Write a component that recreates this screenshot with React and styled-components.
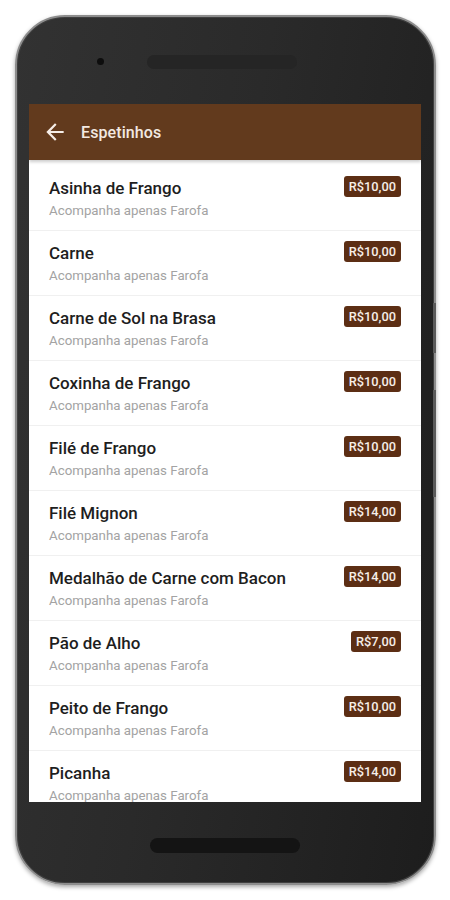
import React from "react";
import styled, { createGlobalStyle } from "styled-components";

const Global = createGlobalStyle`
  html, body { margin: 0; padding: 0; background: #ffffff; }
  body { font-family: Roboto, "Noto Sans", Arial, sans-serif; }
`;

const Page = styled.div`
  width: 450px;
  height: 900px;
  display: flex;
  justify-content: center;
  padding-top: 15px;
  box-sizing: border-box;
`;

const Phone = styled.div`
  position: relative;
  width: 421px;
  height: 870px;
  box-sizing: border-box;
  border: 2px solid #8d8d8d;
  border-radius: 50px;
  background: linear-gradient(100deg, #323232 0%, #2a2a2a 45%, #1d1d1d 100%);
  box-shadow: inset 0 0 0 1px #3f3f3f, 0 2px 4px rgba(0, 0, 0, 0.35);
  display: flex;
  flex-direction: column;
  align-items: center;
`;

const SideButton = styled.div`
  position: absolute;
  right: -2px;
  top: ${(p) => p.$top}px;
  width: 3px;
  height: ${(p) => p.$h}px;
  background: #5a5a5a;
`;

const TopBezel = styled.div`
  height: 87px;
  width: 100%;
  display: flex;
  align-items: flex-start;
  padding-top: 38px;
  padding-left: 80px;
  box-sizing: border-box;
  gap: 43px;
`;

const Camera = styled.div`
  width: 7px;
  height: 7px;
  border-radius: 50%;
  background: #0d0d0d;
  margin-top: 3px;
`;

const Speaker = styled.div`
  width: 150px;
  height: 14px;
  border-radius: 7px;
  background: #252525;
`;

const Screen = styled.div`
  width: 392px;
  height: 698px;
  background: #ffffff;
  overflow: hidden;
  display: flex;
  flex-direction: column;
`;

const AppBar = styled.div`
  height: 56px;
  flex: none;
  background: #623a1d;
  display: flex;
  align-items: center;
  padding-left: 13px;
  gap: 13px;
  box-shadow: 0 2px 3px rgba(0, 0, 0, 0.2);
  position: relative;
  z-index: 1;
`;

const BarTitle = styled.div`
  color: #f3e9e1;
  font-size: 16px;
  font-weight: 500;
  letter-spacing: 0.1px;
`;

const List = styled.div`
  padding-top: 6px;
  display: flex;
  flex-direction: column;
`;

const Row = styled.div`
  height: 65px;
  flex: none;
  box-sizing: border-box;
  padding: 10px 20px 0 20px;
  display: flex;
  justify-content: space-between;
  align-items: flex-start;
  border-bottom: 1px solid #f0f0f0;
`;

const Texts = styled.div`
  display: flex;
  flex-direction: column;
`;

const Title = styled.div`
  margin-top: 1px;
  font-size: 17px;
  line-height: 22px;
  font-weight: 500;
  color: #1e1e1e;
`;

const Sub = styled.div`
  margin-top: 4px;
  font-size: 13.3px;
  line-height: 16px;
  color: #a3a3a3;
`;

const Price = styled.div`
  background: #5c2e14;
  color: #f7efe9;
  font-size: 12.8px;
  font-weight: 500;
  line-height: 21px;
  padding: 0 5px;
  border-radius: 3px;
`;

const BottomBezel = styled.div`
  flex: 1;
  width: 100%;
  display: flex;
  justify-content: center;
  padding-top: 36px;
  box-sizing: border-box;
`;

const HomePill = styled.div`
  width: 150px;
  height: 15px;
  border-radius: 8px;
  background: #141414;
`;

const items = [
  ["Asinha de Frango", "R$10,00"],
  ["Carne", "R$10,00"],
  ["Carne de Sol na Brasa", "R$10,00"],
  ["Coxinha de Frango", "R$10,00"],
  ["Filé de Frango", "R$10,00"],
  ["Filé Mignon", "R$14,00"],
  ["Medalhão de Carne com Bacon", "R$14,00"],
  ["Pão de Alho", "R$7,00"],
  ["Peito de Frango", "R$10,00"],
  ["Picanha", "R$14,00"],
];

const BackArrow = () => (
  <svg width="26" height="26" viewBox="0 0 24 24" fill="#f6eee8">
    <path d="M20 11H7.83l5.59-5.59L12 4l-8 8 8 8 1.41-1.41L7.83 13H20v-2z" />
  </svg>
);

export default function App() {
  return (
    <>
      <Global />
      <Page>
        <Phone>
          <SideButton $top={286} $h={50} />
          <SideButton $top={373} $h={107} />
          <TopBezel>
            <Camera />
            <Speaker />
          </TopBezel>
          <Screen>
            <AppBar>
              <BackArrow />
              <BarTitle>Espetinhos</BarTitle>
            </AppBar>
            <List>
              {items.map(([name, price]) => (
                <Row key={name}>
                  <Texts>
                    <Title>{name}</Title>
                    <Sub>Acompanha apenas Farofa</Sub>
                  </Texts>
                  <Price>{price}</Price>
                </Row>
              ))}
            </List>
          </Screen>
          <BottomBezel>
            <HomePill />
          </BottomBezel>
        </Phone>
      </Page>
    </>
  );
}
